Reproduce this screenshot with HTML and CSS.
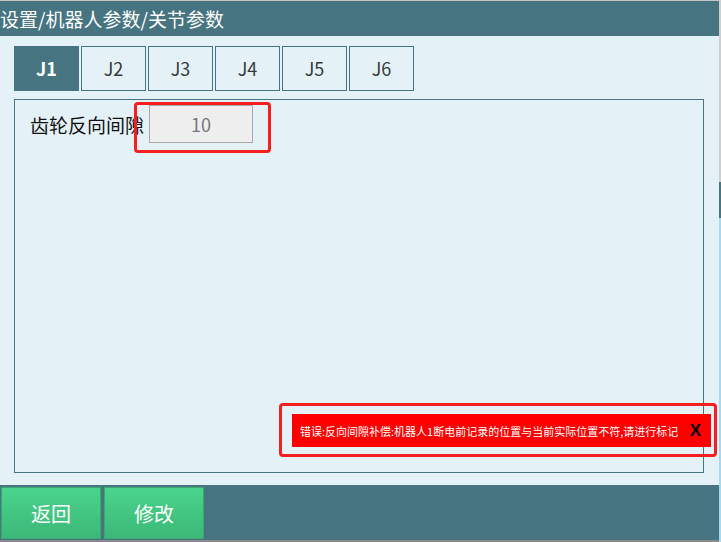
FILE: index.html
```html
<!DOCTYPE html>
<html lang="zh-CN">

<head>
    <meta charset="UTF-8">
    <meta name="viewport" content="width=device-width, initial-scale=1.0">
    <title>关节参数</title>
    <link rel="stylesheet" href="styles.css">
</head>

<body>
    <div class="screen">
        <div class="page">
            <div class="top-line"></div>
            <header class="title-bar">设置/机器人参数/关节参数</header>

            <main class="content">
                <!-- joint tabs -->
                <nav class="tabs">
                    <div class="tab active">J1</div>
                    <div class="tab">J2</div>
                    <div class="tab">J3</div>
                    <div class="tab">J4</div>
                    <div class="tab">J5</div>
                    <div class="tab">J6</div>
                </nav>

                <section class="panel">
                    <div class="field">
                        <span class="label">齿轮反向间隙</span>
                        <input class="value" type="text" value="10" readonly>
                    </div>
                    <div class="mark mark-input"></div>

                    <!-- error message -->
                    <div class="mark mark-error">
                        <div class="toast">
                            <span class="toast-text">错误:反向间隙补偿:机器人1断电前记录的位置与当前实际位置不符,请进行标记</span>
                            <span class="toast-close">X</span>
                        </div>
                    </div>
                </section>
            </main>

            <footer class="bottom-bar">
                <button class="btn" type="button">返回</button>
                <button class="btn" type="button">修改</button>
            </footer>
            <div class="bottom-line"></div>
        </div>

        <div class="side-strip">
            <div class="strip-grey"></div>
            <div class="strip-dark"></div>
            <div class="strip-light"></div>
        </div>
    </div>
</body>

</html>
```

FILE: styles.css
```css
html,
body {
    margin: 0;
    padding: 0;
}

body {
    width: 721px;
    height: 542px;
    overflow: hidden;
    font-family: "Noto Sans CJK SC", "Noto Sans", sans-serif;
    background-color: #e4f2f8;
}

.screen {
    display: flex;
    height: 542px;
}

.page {
    width: 719px;
    display: flex;
    flex-direction: column;
}

.top-line {
    height: 1px;
    background-color: #c4c4c4;
}

.title-bar {
    height: 35px;
    line-height: 35px;
    background-color: #467480;
    color: #fff;
    font-size: 19px;
    white-space: nowrap;
}

.content {
    flex: 1;
    display: flex;
    flex-direction: column;
    gap: 8px;
    padding: 10px 15px 12px 14px;
    background-color: #e4f2f8;
}

.tabs {
    display: flex;
    gap: 2px;
}

.tab {
    box-sizing: border-box;
    width: 65px;
    height: 45px;
    line-height: 43px;
    text-align: center;
    border: 1px solid #467480;
    color: #3a3a3a;
    font-size: 18px;
}

.tab.active {
    background-color: #467480;
    color: #fff;
    font-weight: bold;
}

.panel {
    flex: 1;
    position: relative;
    border: 1px solid #467480;
}

.field {
    display: flex;
    align-items: center;
    gap: 5px;
    padding: 5px 0 0 15px;
}

.label {
    font-size: 19px;
    color: #111;
}

.value {
    box-sizing: border-box;
    width: 104px;
    height: 38px;
    border: 1px solid #a9a9a9;
    background-color: #eeeeee;
    color: #777;
    font-family: "Noto Sans CJK SC", "Noto Sans", sans-serif;
    font-size: 18px;
    text-align: center;
    padding: 0;
    outline: none;
}

/* red highlight boxes */
.mark {
    position: absolute;
    box-sizing: border-box;
    border: 3px solid #f51f1f;
    border-radius: 4px;
}

.mark-input {
    left: 119px;
    top: 2px;
    width: 137px;
    height: 51px;
}

.mark-error {
    left: 264px;
    top: 303px;
    width: 438px;
    height: 54px;
    padding: 8px 3px 0 10px;
}

.toast {
    height: 33px;
    display: flex;
    align-items: center;
    justify-content: space-between;
    padding: 0 10px 0 8px;
    background-color: #ff0000;
}

.toast-text {
    color: #fff;
    font-size: 11px;
    white-space: nowrap;
}

.toast-close {
    color: #000;
    font-family: "Liberation Sans", sans-serif;
    font-weight: bold;
    font-size: 17px;
}

.bottom-bar {
    height: 55px;
    display: flex;
    gap: 3px;
    padding: 2px 0 0 1px;
    box-sizing: border-box;
    background-color: #467480;
}

.btn {
    width: 100px;
    height: 52px;
    border: 1px solid #3aa86f;
    background: linear-gradient(#49d48c, #3cb878);
    color: #fff;
    font-family: "Noto Sans CJK SC", "Noto Sans", sans-serif;
    font-size: 20px;
    padding: 0;
}

.bottom-line {
    height: 2px;
    background-color: #8a8a8a;
}

.side-strip {
    width: 2px;
    display: flex;
    flex-direction: column;
}

.strip-grey {
    height: 182px;
    background-color: #cfcfcf;
}

.strip-dark {
    height: 36px;
    background-color: #467480;
}

.strip-light {
    flex: 1;
    background-color: #a6d8ee;
}
```
